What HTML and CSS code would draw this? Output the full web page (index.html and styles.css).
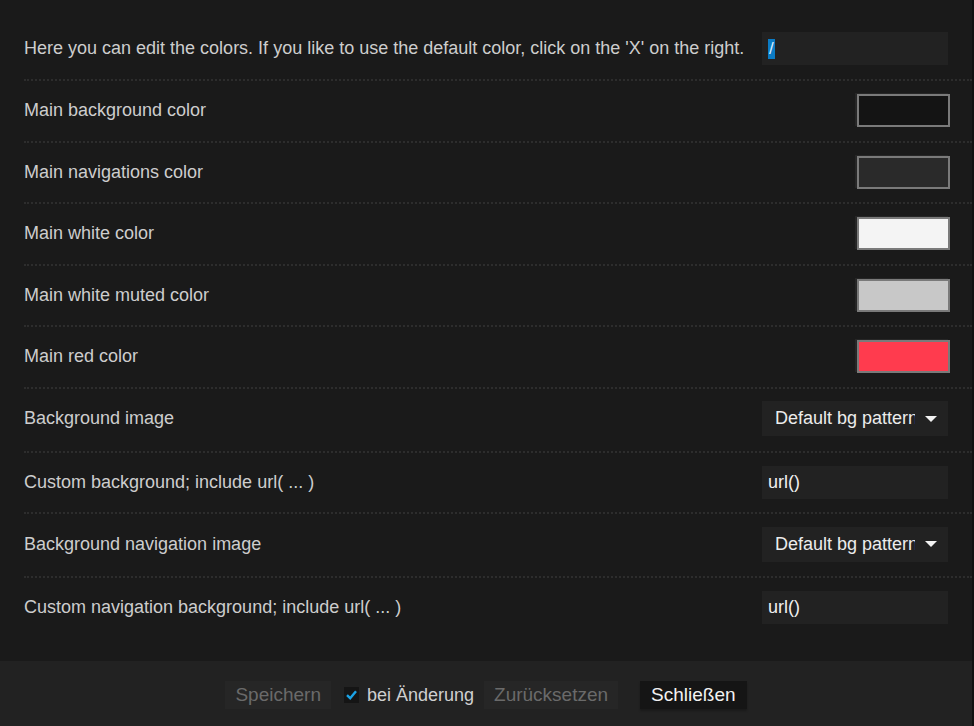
FILE: index.html
```html
<!DOCTYPE html>
<html>
<head>
<meta charset="utf-8">
<link rel="stylesheet" href="styles.css">
</head>
<body>
<div class="page">
  <div class="main">
    <div class="panel">
      <div class="row head">
        <div class="label">Here you can edit the colors. If you like to use the default color, click on the 'X' on the right.</div>
        <div class="field"><span class="sel">/</span></div>
      </div>
      <div class="row">
        <div class="label">Main background color</div>
        <div class="swatch" style="background:#141414"></div>
      </div>
      <div class="row">
        <div class="label">Main navigations color</div>
        <div class="swatch" style="background:#2a2a2a"></div>
      </div>
      <div class="row">
        <div class="label">Main white color</div>
        <div class="swatch" style="background:#f4f4f4"></div>
      </div>
      <div class="row">
        <div class="label">Main white muted color</div>
        <div class="swatch" style="background:#c8c8c8"></div>
      </div>
      <div class="row">
        <div class="label">Main red color</div>
        <div class="swatch" style="background:#ff3b4e"></div>
      </div>
      <div class="row selrow">
        <div class="label">Background image</div>
        <div class="select"><span class="seltext">Default bg pattern</span><span class="caret"></span></div>
      </div>
      <div class="row">
        <div class="label">Custom background; include url( ... )</div>
        <div class="field url">url()</div>
      </div>
      <div class="row selrow">
        <div class="label">Background navigation image</div>
        <div class="select"><span class="seltext">Default bg pattern</span><span class="caret"></span></div>
      </div>
      <div class="row last">
        <div class="label">Custom navigation background; include url( ... )</div>
        <div class="field url">url()</div>
      </div>
    </div>
    <div class="footer">
      <span class="btn disabled">Speichern</span>
      <span class="check"><svg width="11" height="10" viewBox="0 0 11 10"><path d="M1 5.2 L4.2 8.2 L10 1.2" fill="none" stroke="#1ba3e6" stroke-width="2.4"/></svg></span>
      <span class="checklabel">bei Änderung</span>
      <span class="btn disabled">Zurücksetzen</span>
      <span class="btn close">Schließen</span>
    </div>
  </div>
  <div class="edge"></div>
</div>
</body>
</html>
```

FILE: styles.css
```css
html, body {
  margin: 0;
  padding: 0;
  background: #1a1a1a;
}
body {
  font-family: "Liberation Sans", Arial, sans-serif;
  width: 974px;
  height: 726px;
  overflow: hidden;
}
.page {
  display: flex;
  height: 726px;
}
.main {
  width: 972px;
  display: flex;
  flex-direction: column;
}
.edge {
  width: 2px;
  background: #111;
}
.panel {
  flex: 1;
  padding-left: 24px;
}
.row {
  display: flex;
  align-items: center;
  justify-content: space-between;
  padding: 13px 24px 13.5px 0;
  border-bottom: 2px dotted #2d2d2d;
}
.row.head {
  padding-top: 32px;
  padding-bottom: 14px;
}
.row.selrow {
  padding-top: 12.5px;
  padding-bottom: 14.5px;
}
.row.last {
  border-bottom: none;
}
.label {
  font-size: 18px;
  color: #cdcdcd;
  line-height: 21px;
}
.field {
  width: 186px;
  height: 33px;
  box-sizing: border-box;
  background: #222;
  padding-left: 6px;
  display: flex;
  align-items: center;
  font-size: 18px;
  color: #f0f0f0;
}
.sel {
  background: #0b7bc4;
  color: #dfefff;
  line-height: 20px;
  font-size: 17px;
  padding: 0 1px;
}
.swatch {
  width: 93px;
  height: 33px;
  box-sizing: border-box;
  border: 2px solid #7a7a7a;
  box-shadow: -2px -1px 0 #262626;
  margin-right: -2px;
}
.select {
  width: 186px;
  height: 35px;
  box-sizing: border-box;
  background: #222;
  display: flex;
  align-items: center;
  padding-left: 13px;
  font-size: 18px;
  color: #ececec;
}
.seltext {
  width: 140px;
  overflow: hidden;
  white-space: nowrap;
}
.caret {
  margin-left: 10px;
  width: 0;
  height: 0;
  border-left: 6px solid transparent;
  border-right: 6px solid transparent;
  border-top: 6px solid #f2f2f2;
}
.footer {
  height: 65px;
  background: #222;
  display: flex;
  align-items: flex-start;
  justify-content: center;
  padding-top: 20px;
  box-sizing: border-box;
}
.btn {
  height: 28px;
  box-sizing: border-box;
  display: flex;
  align-items: center;
  padding: 0 10px;
  font-size: 19px;
}
.btn.disabled {
  background: #262626;
  color: #6a6a6a;
}
.check {
  width: 15px;
  height: 16px;
  background: #151515;
  margin-left: 13px;
  margin-top: 6px;
  display: flex;
  align-items: center;
  justify-content: center;
}
.checklabel {
  font-size: 18px;
  color: #cfcfcf;
  margin-left: 8px;
  margin-right: 10px;
  line-height: 28px;
}
.btn.close {
  margin-left: 22px;
  background: #151515;
  color: #f2f2f2;
  padding: 0 11px;
  box-shadow: 0 2px 2px rgba(0,0,0,0.25);
}
```
